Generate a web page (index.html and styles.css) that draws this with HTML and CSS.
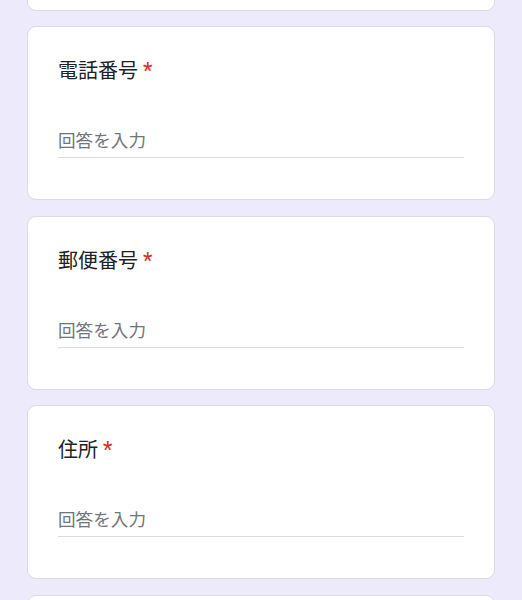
FILE: index.html
```html
<!DOCTYPE html>
<html lang="ja">
<head>
<meta charset="utf-8">
<link rel="stylesheet" href="styles.css">
</head>
<body>
<div class="list">
  <div class="card">
    <div class="title">氏名<span class="req">*</span></div>
    <div class="input">回答を入力</div>
  </div>
  <div class="card">
    <div class="title">電話番号<span class="req">*</span></div>
    <div class="input">回答を入力</div>
  </div>
  <div class="card">
    <div class="title">郵便番号<span class="req">*</span></div>
    <div class="input">回答を入力</div>
  </div>
  <div class="card">
    <div class="title">住所<span class="req">*</span></div>
    <div class="input">回答を入力</div>
  </div>
  <div class="card">
    <div class="title">備考</div>
    <div class="input">回答を入力</div>
  </div>
</div>
</body>
</html>
```
FILE: styles.css
```css
html, body {
  margin: 0;
  padding: 0;
  background: #eceafb;
  height: 600px;
  overflow: hidden;
}
body {
  font-family: "Noto Sans CJK JP", "Noto Sans", sans-serif;
}
.list {
  display: flex;
  flex-direction: column;
  gap: 15.5px;
  margin: -163.5px 0 0 27px;
  width: 468px;
}
.card {
  box-sizing: border-box;
  height: 174px;
  flex: none;
  background: #fff;
  border: 1px solid #dadce0;
  border-radius: 9px;
  padding: 29px 30px 0 30px;
}
.title {
  font-size: 20px;
  line-height: 28px;
  color: #202124;
}
.req {
  font-family: Roboto, "Liberation Sans", sans-serif;
  font-size: 22px;
  color: #d93025;
  margin-left: 5px;
}
.input {
  margin-top: 43px;
  font-size: 17.6px;
  line-height: 24px;
  padding-bottom: 5px;
  color: #70757a;
  border-bottom: 1px solid #dadce0;
}
```
